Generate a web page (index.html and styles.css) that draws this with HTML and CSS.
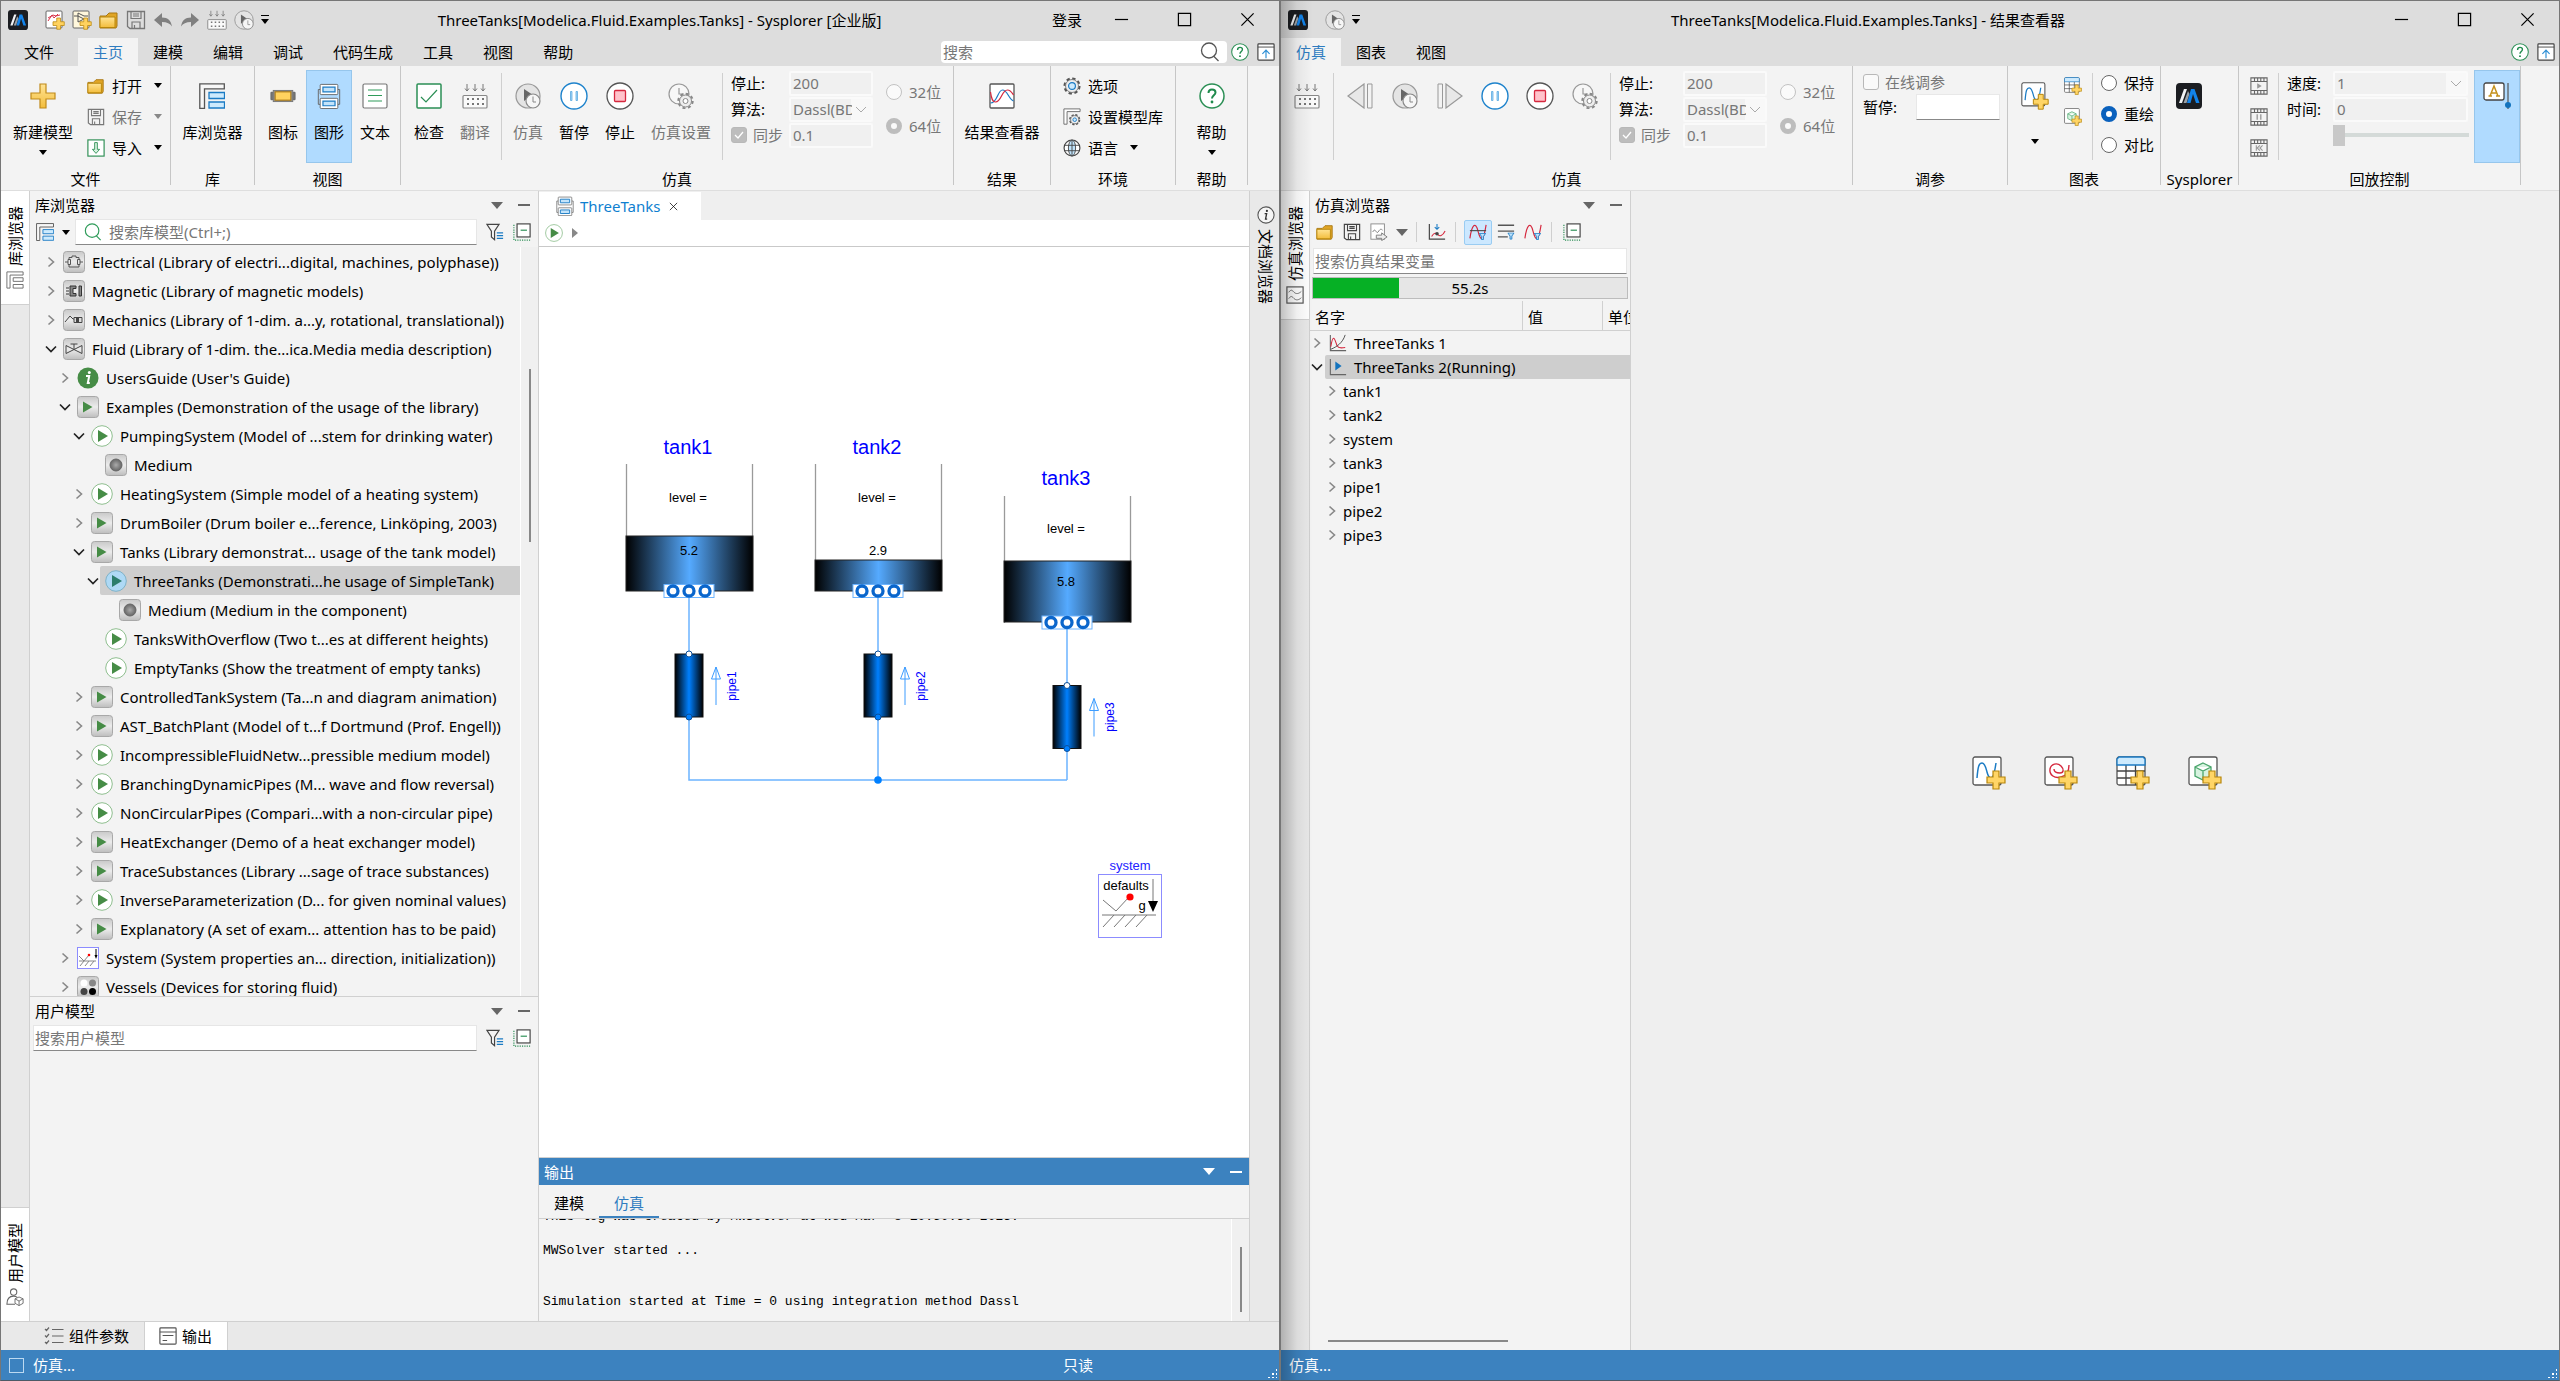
FILE: index.html
```html
<!DOCTYPE html>
<html lang="zh-CN">
<head>
<meta charset="utf-8">
<title>Sysplorer</title>
<link rel="stylesheet" href="styles.css">
</head>
<body>
<svg class="defs" aria-hidden="true">
  <defs>
    <linearGradient id="gold" x1="0" y1="0" x2="0" y2="1"><stop offset="0" stop-color="#ffe394"/><stop offset="1" stop-color="#f3bd3c"/></linearGradient>
    <linearGradient id="metal" x1="0" y1="0" x2="0" y2="1"><stop offset="0" stop-color="#c9c9c9"/><stop offset=".5" stop-color="#ececec"/><stop offset="1" stop-color="#bdbdbd"/></linearGradient>
    <radialGradient id="ball"><stop offset="0" stop-color="#aaa"/><stop offset="1" stop-color="#666"/></radialGradient>
    <linearGradient id="tankFill"><stop offset="0" stop-color="#000"/><stop offset=".5" stop-color="#55aaff"/><stop offset="1" stop-color="#000"/></linearGradient>
    <linearGradient id="pipeFill"><stop offset="0" stop-color="#000"/><stop offset=".5" stop-color="#0080ff"/><stop offset="1" stop-color="#000"/></linearGradient>
    <path id="plus" d="M5 0h5v5h5v5h-5v5H5v-5H0V5h5z" fill="#ffd25f" stroke="#b8860b"/>
  </defs>
  <symbol id="logo" viewBox="0 0 26 26"><rect width="26" height="26" rx="4" fill="#1b1d21"/><path d="M3 20 8 6h3L6 20z" fill="#f2f4f6"/><path d="M7.500 20 12 8l1.500 3-3 9z" fill="#9aa0a6"/><path d="M11 20 15 6h3.500l5 14H20l-3-9-2.500 9z" fill="#1283ea"/></symbol>
  <symbol id="newmodel" viewBox="0 0 20 20"><rect x="1" y="1" width="16" height="17" rx="1" fill="#fff" stroke="#666"/><path d="M3 11 7 5l2 3 4-4M3 8l5-3 3 1 4-1" fill="none" stroke="#d8344a"/><use href="#plus" transform="translate(8 8) scale(.75)"/></symbol>
  <symbol id="newclass" viewBox="0 0 20 20"><rect x="1" y="1" width="16" height="17" rx="1" fill="#fff7dc" stroke="#666"/><path d="M2 6h4l6 3-6 3V3l6 3h4" fill="none" stroke="#555"/><use href="#plus" transform="translate(8 8) scale(.75)"/></symbol>
  <symbol id="folder" viewBox="0 0 20 20"><path d="M1 6h6l3-3h8v13l-1 2H1z" fill="#e0a526" stroke="#a97813"/><path d="M1 7h15v10.500H1z" fill="url(#gold)" stroke="#b8860b"/></symbol>
  <symbol id="save" viewBox="0 0 20 20"><path d="M1.500 1.500h17v17H4l-2.500-2z" fill="none" stroke="currentColor" stroke-width="1.300"/><path d="M5 1.500v7h10v-7M7 4h6M7 6h6M6 18.500V12h8v6.500M8.500 15v3" fill="none" stroke="currentColor" stroke-width="1.200"/></symbol>
  <symbol id="undo" viewBox="0 0 20 20"><path d="M9 3v4.500c6 0 9 3 10 9-2-3-5-4.500-10-4.500V17L1 10z" fill="#808080"/></symbol>
  <symbol id="redo" viewBox="0 0 20 20"><path d="M11 3v4.500c-6 0-9 3-10 9 2-3 5-4.500 10-4.500V17l8-7z" fill="#808080"/></symbol>
  <symbol id="translate" viewBox="0 0 26 26"><path d="M5 1v7m-2-2.500L5 8l2-2.500M13 1v7m-2-2.500L13 8l2-2.500M21 1v7m-2-2.500L21 8l2-2.500" fill="none" stroke="#777"/><rect x="1" y="12.500" width="24" height="12.500" rx="1" fill="#fafafa" stroke="#888" stroke-width="1.200"/><path d="M5 16h2M10 16h2M15 16h2M20 16h2M5 21h2M10 21h2M15 21h2M20 21h2" stroke="#777" stroke-width="2"/></symbol>
  <symbol id="simclock" viewBox="0 0 26 26"><circle cx="13" cy="13" r="12" fill="#e4e4e4" stroke="#999" stroke-width="1.200"/><path d="M9 6v12l9-6z" fill="#666"/><circle cx="18" cy="18" r="7" fill="#f6f6f6" stroke="#888" stroke-width="1.200"/><path d="M18 13.500V19h3" fill="none" stroke="#888"/></symbol>
  <symbol id="simset" viewBox="0 0 26 26"><circle cx="11" cy="11" r="10" fill="#f7f7f7" stroke="#999" stroke-width="1.200"/><path d="M11 5v6h5" fill="none" stroke="#999" stroke-width="1.200"/><circle cx="17.500" cy="18" r="6" fill="#eee" stroke="#888"/><circle cx="17.500" cy="18" r="7.200" fill="none" stroke="#888" stroke-width="2" stroke-dasharray="3 2.650"/><circle cx="17.500" cy="18" r="2.500" fill="#fff" stroke="#888"/></symbol>
  <symbol id="bigplus" viewBox="0 0 26 26"><path d="M10 1h6v9h9v6h-9v9h-6v-9H1v-6h9z" fill="url(#gold)" stroke="#c08a1a" stroke-width="1.200"/></symbol>
  <symbol id="import" viewBox="0 0 20 20"><rect x="1" y="1" width="18" height="18" fill="#fff" stroke="#2f8f55" stroke-width="1.300"/><path d="M8.500 4h3v7.500H14L10 16l-4-4.500h2.500z" fill="#d6f2df" stroke="#2f8f55"/></symbol>
  <symbol id="lib" viewBox="0 0 26 26"><path d="M.800.800h24.500v5H5.500v19.500H.800z" fill="#f7f7f7" stroke="#555" stroke-width="1.300"/><path d="M10 9.500h15.500v6H10zM10 19h15.500v6H10z" fill="#cdeafd" stroke="#1b7bc4" stroke-width="1.300"/></symbol>
  <symbol id="libgray" viewBox="0 0 20 20"><path d="M1 1h18v3.500H4.500V19H1z" fill="#fff" stroke="#666"/><path d="M8 7.500h11v4H8zM8 15h11v4H8z" fill="#fff" stroke="#666"/></symbol>
  <symbol id="iconview" viewBox="0 0 28 28"><path d="M1 10h4v8H1zM23 10h4v8h-4z" fill="#777" stroke="#666"/><rect x="3.500" y="8" width="21" height="12" fill="#999" stroke="#777"/><rect x="5.500" y="9.500" width="17" height="9" fill="#ffd25f" stroke="#a97813" stroke-width="1.200"/></symbol>
  <symbol id="diagram" viewBox="0 0 26 28"><path d="M4 7H1.500v16H4M22 7h2.500v16H22" fill="none" stroke="#666"/><rect x="3.500" y="1.500" width="19" height="11" rx="1" fill="#fff" stroke="#666"/><rect x="3.500" y="16.500" width="19" height="11" rx="1" fill="#fff" stroke="#666"/><path d="M6.500 4.500h13v5h-13zM6.500 19.500h13v5h-13z" fill="#c3e4fb" stroke="#1b7bc4" stroke-width="1.300"/></symbol>
  <symbol id="textview" viewBox="0 0 26 26"><rect x="1" y="1" width="24" height="24" rx="1.500" fill="#fff" stroke="#777" stroke-width="1.200"/><path d="M6 7h14M6 12.500h14M6 18h14" stroke="#2f9c5a" stroke-width="1.200"/></symbol>
  <symbol id="check" viewBox="0 0 26 26"><rect x="1" y="1" width="24" height="24" rx="1" fill="#fff" stroke="#2b8f55" stroke-width="1.500"/><path d="m5 14 5 5L21 7" fill="none" stroke="#2b8f55" stroke-width="1.200"/></symbol>
  <symbol id="pause" viewBox="0 0 28 28"><circle cx="14" cy="14" r="13" fill="#fff" stroke="#1e83cc" stroke-width="1.400"/><path d="M10.500 9.500v9h1.500v-9zM16 9.500v9h1.500v-9z" fill="#a9d8f7" stroke="#4ba0dc" stroke-width=".700"/></symbol>
  <symbol id="stop" viewBox="0 0 28 28"><circle cx="14" cy="14" r="13" fill="#fff" stroke="#555" stroke-width="1.300"/><rect x="8.500" y="8.500" width="11" height="11" rx="1" fill="#ffc3cb" stroke="#d5283e" stroke-width="1.300"/></symbol>
  <symbol id="back" viewBox="0 0 26 26"><path d="M17 1v24L1 13z" fill="#e8e8e8" stroke="#999" stroke-width="1.200"/><path d="M20.500 1H25v24h-4.500z" fill="#f3f3f3" stroke="#999"/></symbol>
  <symbol id="fwd" viewBox="0 0 26 26"><path d="M9 1v24l16-12z" fill="#e8e8e8" stroke="#999" stroke-width="1.200"/><path d="M1 1h4.500v24H1z" fill="#f3f3f3" stroke="#999"/></symbol>
  <symbol id="result" viewBox="0 0 26 26"><rect x="1" y="1" width="24" height="24" rx="1" fill="#fff" stroke="#555" stroke-width="1.300"/><path d="M1.500 20c7 0 7-13 12-13s6 9 11 11" fill="none" stroke="#1b7bc4" stroke-width="1.200"/><path d="M1.500 9c1 7 2 10 5 10 6 0 6-12 12-12 3 0 4 2 6 5" fill="none" stroke="#d5283e" stroke-width="1.200"/></symbol>
  <symbol id="gear" viewBox="0 0 20 20"><circle cx="10" cy="10" r="8" fill="#eee" stroke="#555" stroke-width="3" stroke-dasharray="3.600 2.680"/><circle cx="10" cy="10" r="7.200" fill="#eee" stroke="#777"/><circle cx="10" cy="10" r="3.800" fill="#cdeafd" stroke="#1b7bc4" stroke-width="1.300"/></symbol>
  <symbol id="libset" viewBox="0 0 20 20"><path d="M1 1h18v3H4.500v14H1z" fill="#fff" stroke="#666"/><circle cx="13" cy="13" r="5" fill="#eee" stroke="#555" stroke-width="2.500" stroke-dasharray="2.300 1.630"/><circle cx="13" cy="13" r="4.500" fill="#eee" stroke="#777"/><circle cx="13" cy="13" r="2" fill="#cdeafd" stroke="#1b7bc4"/></symbol>
  <symbol id="globe" viewBox="0 0 20 20"><circle cx="10" cy="10" r="8.800" fill="#fff" stroke="#444" stroke-width="1.300"/><ellipse cx="10" cy="10" rx="4" ry="8.800" fill="#bfe3fb" stroke="#444"/><path d="M1.500 7h17M1.500 13h17M10 1v18" fill="none" stroke="#444"/></symbol>
  <symbol id="help" viewBox="0 0 26 26"><circle cx="13" cy="13" r="12" fill="#fff" stroke="#2b8f55" stroke-width="1.500"/><path d="M9.500 10c0-5 7-4.500 7-.500 0 2.700-3.500 3-3.500 6" fill="none" stroke="#1f8a4c" stroke-width="2"/><circle cx="13" cy="19" r="1.400" fill="#1f8a4c"/></symbol>
  <symbol id="uparrow" viewBox="0 0 20 20"><rect x="1" y="1" width="18" height="18" rx="1" fill="#fff" stroke="#444" stroke-width="1.300"/><path d="M1 4.500h18" stroke="#444"/><path d="M10 17V8m-4 4 4-4 4 4" fill="none" stroke="#2d8fd5" stroke-width="1.300"/></symbol>
  <symbol id="lens" viewBox="0 0 20 20"><circle cx="9" cy="8.500" r="7.500" fill="none" stroke="currentColor" stroke-width="1.300"/><path d="m13.500 14 5 5" stroke="currentColor" stroke-width="1.300"/></symbol>
  <symbol id="filter" viewBox="0 0 20 20"><path d="M1 1.500h13.500l-5 7.500v9.500L6 15.500V9z" fill="none" stroke="#444" stroke-width="1.300"/><path d="M12 11h7M12 14h7M12 17h7" stroke="#1b7bc4" stroke-width="1.300"/></symbol>
  <symbol id="collapse" viewBox="0 0 20 20"><rect x="4.500" y="1" width="14.500" height="14.500" fill="#fff" stroke="#444" stroke-width="1.300"/><path d="M8.500 8h7" stroke="#2b8f55" stroke-width="1.300"/><path d="M1 2v17h18" fill="none" stroke="#2b8f55" stroke-width="1.300" stroke-dasharray="1.300 1.300"/></symbol>
  <symbol id="chevr" viewBox="0 0 14 14"><path d="m4.500 2.500 5 4.500-5 4.500" fill="none" stroke="#888" stroke-width="1.600"/></symbol>
  <symbol id="chevd" viewBox="0 0 14 14"><path d="M2 4.500 7 9.500l5-5" fill="none" stroke="#222" stroke-width="1.700"/></symbol>
  <symbol id="pkg" viewBox="0 0 22 22"><rect x=".500" y=".500" width="21" height="21" rx="3" fill="url(#metal)" stroke="#a8a8a8"/></symbol>
  <symbol id="pkgplay" viewBox="0 0 22 22"><use href="#pkg"/><path d="M6 5.500v11l9.500-5.500z" fill="#468c46"/></symbol>
  <symbol id="play" viewBox="0 0 22 22"><circle cx="11" cy="11" r="10.300" fill="#fff" stroke="#8fbf8f"/><path d="M7 5v12l10-6z" fill="#468c46"/></symbol>
  <symbol id="playsel" viewBox="0 0 22 22"><circle cx="11" cy="11" r="10.300" fill="#aed9f5" stroke="#7fb3c9"/><path d="M7 5v12l10-6z" fill="#2b7d6c"/></symbol>
  <symbol id="medium" viewBox="0 0 22 22"><use href="#pkg"/><circle cx="11" cy="11" r="6" fill="url(#ball)" stroke="#666"/></symbol>
  <symbol id="info" viewBox="0 0 22 22"><circle cx="11" cy="11" r="10.500" fill="#468c46"/><path d="M9 9h3.200l-1.400 7h2" fill="none" stroke="#fff" stroke-width="2"/><circle cx="12.300" cy="5.500" r="1.500" fill="#fff"/></symbol>
  <symbol id="electrical" viewBox="0 0 22 22"><use href="#pkg"/><path d="M2 11h3M17 11h3M5 8.500h2.500v5H5zM14.500 8.500H17v5h-2.500zM6 8.500V6.500h3V5h4v1.500h3v2M6 13.500V16h10v-2.500" fill="none" stroke="#555"/></symbol>
  <symbol id="magnetic" viewBox="0 0 22 22"><use href="#pkg"/><path d="M13 6H7v10h6v-2.500h-3v-5h3zM16 6h2.500v10H16zM3 8h3M3 11h3M3 14h3" fill="#888" stroke="#333"/></symbol>
  <symbol id="mechanics" viewBox="0 0 22 22"><use href="#pkg"/><path d="m2 13 5-6 3 3h2" fill="none" stroke="#444"/><path d="M11 8.500h8v5h-8z" fill="#ddd" stroke="#444"/><path d="M13 9v4h3V9z" fill="#444"/></symbol>
  <symbol id="fluid" viewBox="0 0 22 22"><use href="#pkg"/><path d="M3 7.500v8l16-8v8zM11 11V6M7.500 6h7" fill="none" stroke="#444"/></symbol>
  <symbol id="systemicon" viewBox="0 0 22 22"><rect x=".500" y=".500" width="21" height="21" fill="#fff" stroke="#8c8cff"/><path d="m2 9 5 5 5-6M2 14h17M3 19l4-5M8 19l4-5M13 19l4-5" fill="none" stroke="#888"/><circle cx="12" cy="8" r="1.300" fill="red"/><path d="M19 2v6" stroke="#000"/><path d="M17.500 8h3L19 12z"/></symbol>
  <symbol id="vessels" viewBox="0 0 22 22"><use href="#pkg"/><circle cx="7" cy="7" r="3.500" fill="#fff"/><circle cx="15.500" cy="7" r="3.500" fill="#888"/><circle cx="7" cy="15.500" r="3.500" fill="#444"/><circle cx="15.500" cy="15.500" r="3.500"/></symbol>
  <symbol id="params" viewBox="0 0 20 20"><path d="m1 3 1.500 1.500L5 1.500M1 9.500 2.500 11 5 8M1 16l1.500 1.500L5 14.500M8 3.500h11.500M8 10h11.500M8 16.500h11.500" fill="none" stroke="#666" stroke-width="1.200"/></symbol>
  <symbol id="output" viewBox="0 0 20 20"><rect x="1" y="1" width="18" height="18" rx="1" fill="#fff" stroke="#555" stroke-width="1.300"/><path d="M1 5.500h18M4 9.500h12M4 15h5" stroke="#555" stroke-width="1.200"/></symbol>
  <symbol id="user" viewBox="0 0 20 20"><circle cx="8.500" cy="4.500" r="3.500" fill="none" stroke="#666" stroke-width="1.200"/><path d="M10 18H1c0-6 3-9 7.500-9 2 0 3 .500 4 1.500" fill="none" stroke="#666" stroke-width="1.200"/><path d="m14.500 10 4.500 2v5l-4.500 2.500L10 17v-5zM10 12l4.500 2.500L19 12M14.500 14.500v5" fill="#fff" stroke="#666"/></symbol>
  <symbol id="wave" viewBox="0 0 20 20"><rect x="1" y="1" width="18" height="18" fill="#fff" stroke="#555" stroke-width="1.300"/><path d="M3 7c3-4 4-2 6 0s5 2 8-1M3 14c3-4 4-2 6 0s5 2 8-1" fill="none" stroke="#666"/></symbol>
  <symbol id="inforound" viewBox="0 0 20 20"><circle cx="10" cy="10" r="9" fill="#f6f6f6" stroke="#555" stroke-width="1.200"/><path d="M8.500 8.500h2.200l-1.200 6h1.800" fill="none" stroke="#333" stroke-width="1.500"/><circle cx="11" cy="5.500" r="1.200" fill="#333"/></symbol>
  <symbol id="export" viewBox="0 0 20 20"><rect x="1" y="1" width="15" height="17" fill="#fff" stroke="#888"/><path d="M3 10c3-6 4 3 6 0s3-4 5-2" fill="none" stroke="#777"/><path d="M7 13.500h6V11l6 4.500-6 4V17H7z" fill="#eee" stroke="#777"/></symbol>
  <symbol id="axis" viewBox="0 0 20 20"><path d="M1.500 1v17H19" fill="none" stroke="#444" stroke-width="1.300"/><path d="M10 1v6m-2.500-2.500L10 7l2.500-2.500" fill="none" stroke="#1b7bc4" stroke-width="1.200"/><path d="M4 15c3-5 5-4 7-2s5 2 8-4" fill="none" stroke="#d5283e" stroke-width="1.200"/><circle cx="10" cy="12" r="2" fill="#444"/></symbol>
  <symbol id="funnel" viewBox="0 0 8 8"><path d="M.500.500h7L5 4v3.500H3V4z" fill="#bfe3fb" stroke="#1b7bc4"/></symbol>
  <symbol id="curveline" viewBox="0 0 20 20"><path d="M1 17C3 3 7-3 10 9s6 12 9-7" fill="none" stroke="#d5283e" stroke-width="1.300"/><path d="M1 8.500h18" stroke="#444" stroke-width="1.200"/><use href="#funnel" x="11" y="11" width="8" height="8"/></symbol>
  <symbol id="curve" viewBox="0 0 20 20"><path d="M1 17C3 3 7-3 10 9s6 12 9-7" fill="none" stroke="#d5283e" stroke-width="1.300"/><use href="#funnel" x="11" y="11" width="8" height="8"/></symbol>
  <symbol id="lines" viewBox="0 0 20 20"><path d="M1 2.500h18M1 9h18M1 15.500h11" stroke="#555" stroke-width="1.400"/><use href="#funnel" x="11.500" y="10.500" width="8" height="8"/></symbol>
  <symbol id="plot" viewBox="0 0 20 20"><path d="M1.500 1v17.500H19" fill="none" stroke="#666" stroke-width="1.200"/><path d="M2 14C5-4 7 9 9 13s6 2 9 2" fill="none" stroke="#d5283e" stroke-width="1.200"/><path d="M2 17C9 14 15 10 18 1" fill="none" stroke="#444"/></symbol>
  <symbol id="plotrun" viewBox="0 0 20 20"><path d="M1.500 1v17.500H19" fill="none" stroke="#666" stroke-width="1.200"/><path d="M7 4v10l7-5z" fill="#1273be"/></symbol>
  <symbol id="addcurve" viewBox="0 0 34 34"><rect x="1" y="1" width="28" height="28" rx="2" fill="#fff" stroke="#555" stroke-width="1.300"/><path d="M5 22C6 10 7 7 10 7s4 5 5 9 2 6 4 6 4-8 5-15" fill="none" stroke="#1b7bc4" stroke-width="1.500"/><path d="M21 15h6v6h6v6h-6v6h-6v-6h-6v-6h6z" fill="#ffd566" stroke="#b8860b" stroke-width="1.200"/></symbol>
  <symbol id="addspiral" viewBox="0 0 34 34"><rect x="1" y="1" width="28" height="28" rx="2" fill="#fff" stroke="#555" stroke-width="1.300"/><path d="M10 13c0 3 3 4 6 4 4 0 4-4 1-7-4-4-10-2-11 3-1 6 5 10 11 8 5-1 8-5 8-12" fill="none" stroke="#d5283e" stroke-width="1.400"/><path d="M21 15h6v6h6v6h-6v6h-6v-6h-6v-6h6z" fill="#ffd566" stroke="#b8860b" stroke-width="1.200"/></symbol>
  <symbol id="addtable" viewBox="0 0 34 34"><rect x="1" y="1" width="28" height="28" rx="2" fill="#fff" stroke="#555" stroke-width="1.300"/><path d="M1 15h28M1 22h28M10 9v20M19.500 9v20" stroke="#444" stroke-width="1.300"/><path d="M1 9V3l2-2h24l2 2v6z" fill="#cdeafd" stroke="#1b7bc4" stroke-width="1.300"/><path d="M21 15h6v6h6v6h-6v6h-6v-6h-6v-6h6z" fill="#ffd566" stroke="#b8860b" stroke-width="1.200"/></symbol>
  <symbol id="addcube" viewBox="0 0 34 34"><rect x="1" y="1" width="28" height="28" rx="2" fill="#fff" stroke="#555" stroke-width="1.300"/><path d="m15 7 8 4v9l-8 4-8-4v-9zM7 11l8 4 8-4M15 15v9" fill="#d7f3e0" stroke="#4aa56c" stroke-width="1.300"/><path d="M21 15h6v6h6v6h-6v6h-6v-6h-6v-6h6z" fill="#ffd566" stroke="#b8860b" stroke-width="1.200"/></symbol>
  <symbol id="film" viewBox="0 0 20 20"><path d="M1 1h18v18H1zM1 5h18M1 15h18M5 1v4M8.500 1v4M12 1v4M15.500 1v4M5 15v4M8.500 15v4M12 15v4M15.500 15v4" fill="none" stroke="#666" stroke-width="1.200"/></symbol>
  <symbol id="filmplay" viewBox="0 0 20 20"><use href="#film"/><path d="M8 7v6l5-3z" fill="#999"/></symbol>
  <symbol id="filmpause" viewBox="0 0 20 20"><use href="#film"/><path d="M8 7v6M12 7v6" stroke="#999" stroke-width="1.500"/></symbol>
  <symbol id="filmstart" viewBox="0 0 20 20"><use href="#film"/><path d="M7 7v6M11 7l-3 3 3 3M14 7l-3 3 3 3" fill="none" stroke="#999" stroke-width="1.200"/></symbol>
  <symbol id="annot" viewBox="0 0 28 28"><rect x="1" y="1" width="20" height="17" rx="2" fill="#fff" stroke="#444" stroke-width="1.300"/><path d="m7 14 4-10 4 10M8.500 11h5M5.500 14h3.500M13 14h4" fill="none" stroke="#c4911c" stroke-width="1.500"/><path d="M25 1v26" stroke="#555" stroke-width="1.200"/><circle cx="25" cy="23" r="3" fill="#1273be"/></symbol>
  <symbol id="wmin" viewBox="0 0 16 16"><path d="M1 8h14" stroke="#000" stroke-width="1.300"/></symbol>
  <symbol id="wmax" viewBox="0 0 16 16"><path d="M1.500 1.500h13v13h-13z" fill="none" stroke="#000" stroke-width="1.300"/></symbol>
  <symbol id="wclose" viewBox="0 0 16 16"><path d="m1.500 1.500 13 13m0-13-13 13" stroke="#000" stroke-width="1.300"/></symbol>
</svg>

<div class="desktop">
<section class="window" aria-label="Sysplorer">
  <header class="titlebar">
    <div class="qat">
      <svg class="i20 app"><use href="#logo"/></svg>
      <button aria-label="新建模型"><svg class="i20"><use href="#newmodel"/></svg></button>
      <button aria-label="新建"><svg class="i20"><use href="#newclass"/></svg></button>
      <button aria-label="打开"><svg class="i20"><use href="#folder"/></svg></button>
      <button class="dim" aria-label="保存"><svg class="i20"><use href="#save"/></svg></button>
      <button aria-label="撤销"><svg class="i20"><use href="#undo"/></svg></button>
      <button aria-label="重做"><svg class="i20"><use href="#redo"/></svg></button>
      <button aria-label="翻译"><svg class="i20"><use href="#translate"/></svg></button>
      <button aria-label="仿真"><svg class="i20"><use href="#simclock"/></svg></button>
      <button class="more" aria-label="更多"><i class="bar"></i><i class="caret"></i></button>
    </div>
    <h1>ThreeTanks[Modelica.Fluid.Examples.Tanks] - Sysplorer [企业版]</h1>
    <button class="login">登录</button>
    <div class="winctl">
      <button aria-label="最小化"><svg><use href="#wmin"/></svg></button>
      <button aria-label="最大化"><svg><use href="#wmax"/></svg></button>
      <button aria-label="关闭"><svg><use href="#wclose"/></svg></button>
    </div>
  </header>
  <nav class="tabs">
    <button class="file">文件</button><button class="on">主页</button><button>建模</button><button>编辑</button><button>调试</button><button>代码生成</button><button>工具</button><button>视图</button><button>帮助</button>
    <div class="tabtools">
      <label class="findbox"><input type="text" placeholder="搜索" aria-label="搜索"><svg class="i20"><use href="#lens"/></svg></label>
      <button aria-label="帮助"><svg class="i18"><use href="#help"/></svg></button>
      <button aria-label="折叠"><svg class="i18"><use href="#uparrow"/></svg></button>
    </div>
  </nav>
  <div class="ribbon">
    <div class="group g-file">
      <div class="tools">
        <button class="big wide"><svg><use href="#bigplus"/></svg><span>新建模型</span><i class="caret"></i></button>
        <div class="stack">
          <button class="small"><svg class="i18"><use href="#folder"/></svg><span>打开</span><i class="caret"></i></button>
          <button class="small dim" disabled><svg class="i18"><use href="#save"/></svg><span>保存</span><i class="caret"></i></button>
          <button class="small"><svg class="i18"><use href="#import"/></svg><span>导入</span><i class="caret"></i></button>
        </div>
      </div>
      <h2>文件</h2>
    </div>
    <div class="group g-lib">
      <div class="tools center"><button class="big"><svg><use href="#lib"/></svg><span>库浏览器</span></button></div>
      <h2>库</h2>
    </div>
    <div class="group g-view">
      <div class="tools pad5">
        <button class="big"><svg><use href="#iconview"/></svg><span>图标</span></button>
        <button class="big sel"><svg><use href="#diagram"/></svg><span>图形</span></button>
        <button class="big"><svg><use href="#textview"/></svg><span>文本</span></button>
      </div>
      <h2>视图</h2>
    </div>
    <div class="group g-sim">
      <div class="tools pad5">
        <button class="big"><svg><use href="#check"/></svg><span>检查</span></button>
        <button class="big dim" disabled><svg><use href="#translate"/></svg><span>翻译</span></button>
        <i class="sep"></i>
        <button class="big dim" disabled><svg><use href="#simclock"/></svg><span>仿真</span></button>
        <button class="big"><svg class="i28"><use href="#pause"/></svg><span>暂停</span></button>
        <button class="big"><svg class="i28"><use href="#stop"/></svg><span>停止</span></button>
        <button class="big dim w76" disabled><svg><use href="#simset"/></svg><span>仿真设置</span></button>
        <i class="sep"></i>
        <div class="form">
          <label for="stop1">停止:</label><input id="stop1" type="text" value="200" disabled>
          <label for="alg1">算法:</label><select id="alg1" disabled><option>Dassl(BDF)</option></select>
          <label class="tick dim"><input type="checkbox" checked disabled>同步</label><input type="text" value="0.1" aria-label="同步间隔" disabled>
        </div>
        <div class="radios">
          <label class="dim"><input type="radio" name="bits1" disabled>32位</label>
          <label class="dim"><input type="radio" name="bits1" checked disabled>64位</label>
        </div>
      </div>
      <h2>仿真</h2>
    </div>
    <div class="group g-res">
      <div class="tools center"><button class="big"><svg><use href="#result"/></svg><span>结果查看器</span></button></div>
      <h2>结果</h2>
    </div>
    <div class="group g-env">
      <div class="tools pad10"><div class="stack">
        <button class="small"><svg class="i18"><use href="#gear"/></svg><span>选项</span></button>
        <button class="small"><svg class="i18"><use href="#libset"/></svg><span>设置模型库</span></button>
        <button class="small"><svg class="i18"><use href="#globe"/></svg><span>语言</span><i class="caret"></i></button>
      </div></div>
      <h2>环境</h2>
    </div>
    <div class="group g-help">
      <div class="tools center"><button class="big"><svg><use href="#help"/></svg><span>帮助</span><i class="caret"></i></button></div>
      <h2>帮助</h2>
    </div>
  </div>

  <div class="body">
    <aside class="strip left">
      <button class="vtab up"><span>库浏览器</span><svg class="i18"><use href="#libgray"/></svg></button>
      <button class="vtab up last"><span>用户模型</span><svg class="i18"><use href="#user"/></svg></button>
    </aside>
    <div class="panel lib">
      <div class="phead"><h3>库浏览器</h3><i class="caret wide"></i><i class="dash"></i></div>
      <div class="psearch">
        <button class="mode" aria-label="显示方式"><svg class="i18"><use href="#lib"/></svg><i class="caret"></i></button>
        <label class="field"><svg class="i18"><use href="#lens"/></svg><input type="text" placeholder="搜索库模型(Ctrl+;)" aria-label="搜索库模型"></label>
        <button aria-label="筛选"><svg class="i18"><use href="#filter"/></svg></button>
        <button aria-label="全部折叠"><svg class="i18"><use href="#collapse"/></svg></button>
      </div>
      <div class="treebox">
        <ul class="tree">
          <li class="l0"><svg class="chev"><use href="#chevr"/></svg><span class="item"><svg><use href="#electrical"/></svg>Electrical (Library of electri...digital, machines, polyphase))</span></li>
          <li class="l0"><svg class="chev"><use href="#chevr"/></svg><span class="item"><svg><use href="#magnetic"/></svg>Magnetic (Library of magnetic models)</span></li>
          <li class="l0"><svg class="chev"><use href="#chevr"/></svg><span class="item"><svg><use href="#mechanics"/></svg>Mechanics (Library of 1-dim. a...y, rotational, translational))</span></li>
          <li class="l0"><svg class="chev"><use href="#chevd"/></svg><span class="item"><svg><use href="#fluid"/></svg>Fluid (Library of 1-dim. the...ica.Media media description)</span></li>
          <li class="l1"><svg class="chev"><use href="#chevr"/></svg><span class="item"><svg><use href="#info"/></svg>UsersGuide (User's Guide)</span></li>
          <li class="l1"><svg class="chev"><use href="#chevd"/></svg><span class="item"><svg><use href="#pkgplay"/></svg>Examples (Demonstration of the usage of the library)</span></li>
          <li class="l2"><svg class="chev"><use href="#chevd"/></svg><span class="item"><svg><use href="#play"/></svg>PumpingSystem (Model of ...stem for drinking water)</span></li>
          <li class="l3"><i class="chev"></i><span class="item"><svg><use href="#medium"/></svg>Medium</span></li>
          <li class="l2"><svg class="chev"><use href="#chevr"/></svg><span class="item"><svg><use href="#play"/></svg>HeatingSystem (Simple model of a heating system)</span></li>
          <li class="l2"><svg class="chev"><use href="#chevr"/></svg><span class="item"><svg><use href="#pkgplay"/></svg>DrumBoiler (Drum boiler e...ference, Linköping, 2003)</span></li>
          <li class="l2"><svg class="chev"><use href="#chevd"/></svg><span class="item"><svg><use href="#pkgplay"/></svg>Tanks (Library demonstrat... usage of the tank model)</span></li>
          <li class="l3"><svg class="chev"><use href="#chevd"/></svg><span class="item sel"><svg><use href="#playsel"/></svg>ThreeTanks (Demonstrati...he usage of SimpleTank)</span></li>
          <li class="l4"><i class="chev"></i><span class="item"><svg><use href="#medium"/></svg>Medium (Medium in the component)</span></li>
          <li class="l3"><i class="chev"></i><span class="item"><svg><use href="#play"/></svg>TanksWithOverflow (Two t...es at different heights)</span></li>
          <li class="l3"><i class="chev"></i><span class="item"><svg><use href="#play"/></svg>EmptyTanks (Show the treatment of empty tanks)</span></li>
          <li class="l2"><svg class="chev"><use href="#chevr"/></svg><span class="item"><svg><use href="#pkgplay"/></svg>ControlledTankSystem (Ta...n and diagram animation)</span></li>
          <li class="l2"><svg class="chev"><use href="#chevr"/></svg><span class="item"><svg><use href="#pkgplay"/></svg>AST_BatchPlant (Model of t...f Dortmund (Prof. Engell))</span></li>
          <li class="l2"><svg class="chev"><use href="#chevr"/></svg><span class="item"><svg><use href="#play"/></svg>IncompressibleFluidNetw...pressible medium model)</span></li>
          <li class="l2"><svg class="chev"><use href="#chevr"/></svg><span class="item"><svg><use href="#play"/></svg>BranchingDynamicPipes (M... wave and flow reversal)</span></li>
          <li class="l2"><svg class="chev"><use href="#chevr"/></svg><span class="item"><svg><use href="#play"/></svg>NonCircularPipes (Compari...with a non-circular pipe)</span></li>
          <li class="l2"><svg class="chev"><use href="#chevr"/></svg><span class="item"><svg><use href="#pkgplay"/></svg>HeatExchanger (Demo of a heat exchanger model)</span></li>
          <li class="l2"><svg class="chev"><use href="#chevr"/></svg><span class="item"><svg><use href="#pkgplay"/></svg>TraceSubstances (Library ...sage of trace substances)</span></li>
          <li class="l2"><svg class="chev"><use href="#chevr"/></svg><span class="item"><svg><use href="#play"/></svg>InverseParameterization (D... for given nominal values)</span></li>
          <li class="l2"><svg class="chev"><use href="#chevr"/></svg><span class="item"><svg><use href="#pkgplay"/></svg>Explanatory (A set of exam... attention has to be paid)</span></li>
          <li class="l1"><svg class="chev"><use href="#chevr"/></svg><span class="item"><svg><use href="#systemicon"/></svg>System (System properties an... direction, initialization))</span></li>
          <li class="l1"><svg class="chev"><use href="#chevr"/></svg><span class="item"><svg><use href="#vessels"/></svg>Vessels (Devices for storing fluid)</span></li>
        </ul>
        <div class="vscroll"><i class="thumb"></i></div>
      </div>
      <div class="usermodel">
        <div class="phead"><h3>用户模型</h3><i class="caret wide"></i><i class="dash"></i></div>
        <div class="psearch">
          <label class="field plain"><input type="text" placeholder="搜索用户模型" aria-label="搜索用户模型"></label>
          <button aria-label="筛选"><svg class="i18"><use href="#filter"/></svg></button>
          <button aria-label="全部折叠"><svg class="i18"><use href="#collapse"/></svg></button>
        </div>
      </div>
    </div>
    <main class="editor">
      <div class="doctabs"><div class="doctab"><svg class="i20"><use href="#diagram"/></svg><span>ThreeTanks</span><button aria-label="关闭"><svg><use href="#wclose"/></svg></button></div></div>
      <div class="crumbs"><svg class="i18"><use href="#play"/></svg><i class="rcaret"></i></div>
      <div class="canvas">
        <svg viewBox="539 247 710 910" role="img" aria-label="ThreeTanks">
          <g fill="none" stroke="#6cb4ff" stroke-width="1.500">
            <path d="M689 598v182h378M878 598v182M1067 629v151"/>
          </g>
          <g>
            <path d="M626.500 464v127M752.500 464v127M815.500 464v127M941.500 464v127M1004.500 496v127M1130.500 496v127" stroke="#9a9a9a" stroke-width="1.300"/>
            <rect x="626" y="536" width="127" height="55" fill="url(#tankFill)" stroke="#222"/>
            <rect x="815" y="560" width="127" height="31" fill="url(#tankFill)" stroke="#222"/>
            <rect x="1004" y="561" width="127" height="61" fill="url(#tankFill)" stroke="#222"/>
          </g>
          <g id="ports">
            <rect x="664" y="584.500" width="50" height="13" fill="#fff" stroke="#6cb4ff"/>
            <g fill="#fff" stroke="#0a66cc" stroke-width="3.300"><circle cx="673" cy="591" r="5"/><circle cx="689" cy="591" r="5"/><circle cx="705" cy="591" r="5"/></g>
          </g>
          <use href="#ports" x="189"/><use href="#ports" x="378" y="31.500"/>
          <g id="pipe">
            <rect x="675" y="654" width="28" height="63" fill="url(#pipeFill)" stroke="#111"/>
            <circle cx="689" cy="654" r="3" fill="#fff" stroke="#0b4f99"/><circle cx="689" cy="717" r="3" fill="#0080ff" stroke="#0b4f99"/>
            <path d="M716 705v-38M711.500 679l4.500-12 4.500 12z" fill="none" stroke="#3c9cff"/>
          </g>
          <use href="#pipe" x="189"/><use href="#pipe" x="378" y="31.500"/>
          <circle cx="878" cy="780" r="3.800" fill="#0080ff"/>
          <g class="tname"><text x="688" y="454">tank1</text><text x="877" y="454">tank2</text><text x="1066" y="485">tank3</text></g>
          <g class="tval"><text x="688" y="502">level =</text><text x="877" y="502">level =</text><text x="1066" y="533">level =</text>
            <text x="689" y="555">5.2</text><text x="878" y="555">2.9</text><text x="1066" y="586">5.8</text></g>
          <g class="tpipe"><text transform="translate(736 686) rotate(-90)">pipe1</text><text transform="translate(925 686) rotate(-90)">pipe2</text><text transform="translate(1114 717) rotate(-90)">pipe3</text></g>
          <text class="tsys" x="1130" y="870">system</text>
          <rect x="1098.500" y="874.500" width="63" height="63" fill="#fff" stroke="#8c8cff"/>
          <path d="m1103 900 13 11 13-14M1102 915h54M1103 927l11-12M1114 927l11-12M1125 927l11-12M1136 927l11-12M1153 879v22" fill="none" stroke="#777"/>
          <circle cx="1130" cy="897" r="3.600" fill="red"/><path d="M1148 901h10l-5 11z"/>
          <g class="tval"><text x="1126" y="890">defaults</text><text x="1142" y="910">g</text></g>
        </svg>
      </div>
      <section class="outpane">
        <div class="ohead"><h3>输出</h3><i class="caret wide"></i><i class="dash"></i></div>
        <div class="otabs"><button>建模</button><button class="on">仿真</button></div>
        <div class="logbox">
<pre>This log was created by MWSolver at Wed Mar  8 10:50:50 2023.

MWSolver started ...


Simulation started at Time = 0 using integration method Dassl</pre>
          <div class="vscroll"><i class="thumb"></i></div>
        </div>
      </section>
    </main>
    <aside class="strip right"><button class="vtab down"><svg class="i18"><use href="#inforound"/></svg><span>文档浏览器</span></button></aside>
  </div>
  <div class="bottombar">
    <button><svg class="i20"><use href="#params"/></svg>组件参数</button><button class="on"><svg class="i18"><use href="#output"/></svg>输出</button>
  </div>
  <footer class="status"><i class="square"></i><span>仿真...</span><span class="ro">只读</span><i class="grip"></i></footer>
</section>

<section class="window viewer" aria-label="结果查看器">
  <header class="titlebar">
    <div class="qat">
      <svg class="i20 app"><use href="#logo"/></svg>
      <button aria-label="仿真"><svg class="i20"><use href="#simclock"/></svg></button>
      <button class="more" aria-label="更多"><i class="bar"></i><i class="caret"></i></button>
    </div>
    <h1>ThreeTanks[Modelica.Fluid.Examples.Tanks] - 结果查看器</h1>
    <div class="winctl">
      <button aria-label="最小化"><svg><use href="#wmin"/></svg></button>
      <button aria-label="最大化"><svg><use href="#wmax"/></svg></button>
      <button aria-label="关闭"><svg><use href="#wclose"/></svg></button>
    </div>
  </header>
  <nav class="tabs">
    <button class="on">仿真</button><button>图表</button><button>视图</button>
    <div class="tabtools">
      <button aria-label="帮助"><svg class="i18"><use href="#help"/></svg></button>
      <button aria-label="折叠"><svg class="i18"><use href="#uparrow"/></svg></button>
    </div>
  </nav>
  <div class="ribbon">
    <div class="group v-sim">
      <div class="tools pad3">
        <button class="big" aria-label="翻译"><svg><use href="#translate"/></svg></button>
        <i class="sep"></i>
        <button class="big w45" aria-label="后退"><svg><use href="#back"/></svg></button>
        <button class="big w45" aria-label="仿真"><svg><use href="#simclock"/></svg></button>
        <button class="big w45" aria-label="前进"><svg><use href="#fwd"/></svg></button>
        <button class="big w45" aria-label="暂停"><svg class="i28"><use href="#pause"/></svg></button>
        <button class="big w45" aria-label="停止"><svg class="i28"><use href="#stop"/></svg></button>
        <button class="big w45" aria-label="仿真设置"><svg><use href="#simset"/></svg></button>
        <i class="sep"></i>
        <div class="form">
          <label for="stop2">停止:</label><input id="stop2" type="text" value="200" disabled>
          <label for="alg2">算法:</label><select id="alg2" disabled><option>Dassl(BDF)</option></select>
          <label class="tick dim"><input type="checkbox" checked disabled>同步</label><input type="text" value="0.1" aria-label="同步间隔" disabled>
        </div>
        <div class="radios">
          <label class="dim"><input type="radio" name="bits2" disabled>32位</label>
          <label class="dim"><input type="radio" name="bits2" checked disabled>64位</label>
        </div>
      </div>
      <h2>仿真</h2>
    </div>
    <div class="group v-tune">
      <div class="tools pad10"><div class="tune">
        <label class="tick dim"><input type="checkbox" disabled>在线调参</label>
        <label for="pauseat">暂停:</label><input id="pauseat" type="text">
      </div></div>
      <h2>调参</h2>
    </div>
    <div class="group v-chart">
      <div class="tools">
        <button class="big w54" aria-label="新建曲线"><svg class="i28"><use href="#addcurve"/></svg><i class="caret"></i></button>
        <div class="stack"><button class="small" aria-label="新建表格"><svg class="i18"><use href="#addtable"/></svg></button><button class="small" aria-label="新建动画"><svg class="i18"><use href="#addcube"/></svg></button></div>
        <i class="sep gap"></i>
        <div class="radios three">
          <label><input type="radio" name="keep">保持</label>
          <label><input type="radio" name="keep" checked>重绘</label>
          <label><input type="radio" name="keep">对比</label>
        </div>
      </div>
      <h2>图表</h2>
    </div>
    <div class="group v-sys">
      <div class="tools pad5"><button class="big" aria-label="Sysplorer"><svg><use href="#logo"/></svg></button></div>
      <h2>Sysplorer</h2>
    </div>
    <div class="group v-play">
      <div class="tools pad9">
        <div class="stack"><button class="small" aria-label="播放"><svg class="i18"><use href="#filmplay"/></svg></button><button class="small" aria-label="暂停"><svg class="i18"><use href="#filmpause"/></svg></button><button class="small" aria-label="回到开始"><svg class="i18"><use href="#filmstart"/></svg></button></div>
        <i class="sep gap"></i>
        <div class="form playback">
          <label for="speed">速度:</label><select id="speed" disabled><option>1</option></select>
          <label for="time">时间:</label><input id="time" type="text" value="0" disabled>
          <span></span><input type="range" value="0" aria-label="时间" disabled>
        </div>
        <button class="big sel" aria-label="标注"><svg class="i28"><use href="#annot"/></svg></button>
      </div>
      <h2>回放控制</h2>
    </div>
  </div>
  <div class="body">
    <aside class="strip left"><button class="vtab up"><span>仿真浏览器</span><svg class="i18"><use href="#wave"/></svg></button></aside>
    <div class="panel sim">
      <div class="phead"><h3>仿真浏览器</h3><i class="caret wide"></i><i class="dash"></i></div>
      <div class="toolrow">
        <button aria-label="打开"><svg class="i18"><use href="#folder"/></svg></button>
        <button class="dark" aria-label="保存"><svg class="i18"><use href="#save"/></svg></button>
        <button aria-label="导出"><svg class="i18"><use href="#export"/></svg></button>
        <i class="caret wide"></i><i class="tsep"></i>
        <button aria-label="坐标轴"><svg class="i18"><use href="#axis"/></svg></button>
        <i class="tsep"></i>
        <button class="on" aria-label="筛选曲线"><svg class="i18"><use href="#curveline"/></svg></button>
        <button aria-label="筛选列表"><svg class="i18"><use href="#lines"/></svg></button>
        <button aria-label="筛选变量"><svg class="i18"><use href="#curve"/></svg></button>
        <i class="tsep"></i>
        <button aria-label="全部折叠"><svg class="i18"><use href="#collapse"/></svg></button>
      </div>
      <label class="field plain"><input type="text" placeholder="搜索仿真结果变量" aria-label="搜索仿真结果变量"></label>
      <div class="progress"><i style="width:27.400%"></i><span>55.2s</span></div>
      <div class="cols"><span>名字</span><span>值</span><span>单位</span></div>
      <ul class="tree vars">
        <li><svg class="chev"><use href="#chevr"/></svg><span class="item"><svg><use href="#plot"/></svg>ThreeTanks 1</span></li>
        <li><svg class="chev"><use href="#chevd"/></svg><span class="item sel"><svg><use href="#plotrun"/></svg>ThreeTanks 2(Running)</span></li>
        <li class="v1"><svg class="chev"><use href="#chevr"/></svg><span class="item">tank1</span></li>
        <li class="v1"><svg class="chev"><use href="#chevr"/></svg><span class="item">tank2</span></li>
        <li class="v1"><svg class="chev"><use href="#chevr"/></svg><span class="item">system</span></li>
        <li class="v1"><svg class="chev"><use href="#chevr"/></svg><span class="item">tank3</span></li>
        <li class="v1"><svg class="chev"><use href="#chevr"/></svg><span class="item">pipe1</span></li>
        <li class="v1"><svg class="chev"><use href="#chevr"/></svg><span class="item">pipe2</span></li>
        <li class="v1"><svg class="chev"><use href="#chevr"/></svg><span class="item">pipe3</span></li>
      </ul>
      <div class="hscroll"><i></i></div>
    </div>
    <main class="blank">
      <button aria-label="新建曲线"><svg><use href="#addcurve"/></svg></button>
      <button aria-label="新建轨迹"><svg><use href="#addspiral"/></svg></button>
      <button aria-label="新建表格"><svg><use href="#addtable"/></svg></button>
      <button aria-label="新建动画"><svg><use href="#addcube"/></svg></button>
    </main>
  </div>
  <footer class="status"><span>仿真...</span><i class="grip"></i></footer>
</section>
</div>
</body>
</html>
```

FILE: styles.css
```css
* { box-sizing: border-box; }
body { margin: 0; font: 15px/20px "Noto Sans", "Noto Sans CJK SC", sans-serif; color: #000; background: #f3f3f3; }
button, input, select { font: inherit; color: inherit; }
button { margin: 0; padding: 0; border: 0; background: none; display: flex; align-items: center; }
h1, h2, h3, ul, pre { margin: 0; padding: 0; font-weight: 400; font-size: 15px; }
ul { list-style: none; }
svg, i { display: block; flex: none; }
.defs { position: absolute; width: 0; height: 0; }
.i18 { width: 18px; height: 18px; }
.i20 { width: 20px; height: 20px; }
.dim { color: #777; }
.caret { width: 0; height: 0; border: 4px solid transparent; border-top: 5px solid #000; border-bottom: 0; }
.dim .caret { border-top-color: #888; }
.caret.wide { border-width: 6px; border-top-width: 7px; border-top-color: #666; border-bottom-width: 0; }
.dash { width: 12px; height: 2px; background: #666; }

.desktop { display: grid; grid-template-columns: 1fr 1fr; height: 100vh; }
.window { position: relative; display: flex; flex-direction: column; min-width: 0; border: 1px solid #767676; border-bottom-color: #4c5a66; background: #f3f3f3; overflow: hidden; }
/* shadow that the active window casts on the viewer */
.viewer::before { content: ""; position: absolute; z-index: 2; inset: 0 auto 0 0; width: 32px; background: linear-gradient(90deg, rgba(0,0,0,.24), rgba(0,0,0,.06) 50%, transparent); pointer-events: none; }

.titlebar { flex: none; display: flex; align-items: center; height: 37px; background: #ddd; }
.qat { display: flex; align-items: center; gap: 7px; padding-left: 7px; }
.qat .app { margin-right: 10px; }
.qat .more { flex-direction: column; gap: 3px; margin: 0 6px 0 0; }
.qat .bar { width: 8px; height: 1px; background: #000; }
.titlebar h1 { flex: 1; min-width: 0; text-align: center; white-space: nowrap; }
.login { padding: 0 8px; }
.winctl { display: flex; }
.winctl button { width: 63px; height: 36px; justify-content: center; }
.winctl svg { width: 15px; height: 15px; }

.tabs { flex: none; display: flex; height: 28px; background: #ddd; }
.tabs > button { padding: 0 15px; }
.tabs > .file { padding: 0 24px 0 23px; }
.tabs > .on { background: #f3f3f3; color: #2f7cc0; }
.tabtools { display: flex; align-items: center; gap: 8px; margin-left: auto; padding-right: 4px; }
.findbox { display: flex; align-items: center; width: 286px; height: 22px; margin-right: -4px; padding: 0 7px 0 2px; border-radius: 4px; background: #fff; color: #555; }
.findbox input { flex: 1; min-width: 0; padding: 0; border: 0; background: none; outline: 0; }
::placeholder { color: #777; opacity: 1; }

.ribbon { flex: none; display: flex; align-items: flex-start; height: 125px; border-bottom: 1px solid #dedede; background: #f3f3f3; }
.group { display: flex; flex-direction: column; height: 119px; border-right: 1px solid #c6c6c6; flex: none; }
.group h2 { margin-top: auto; line-height: 12px; text-align: center; white-space: nowrap; }
.tools { display: flex; height: 97px; padding-top: 4px; }
.center { justify-content: center; }
.pad3 { padding-left: 3px; }
.pad5 { padding-left: 5px; }
.pad9 { padding-left: 9px; }
.pad10 { padding-left: 10px; }
.g-file { width: 170px; }
.g-lib { width: 84px; }
.g-view { width: 146px; }
.g-sim { width: 553px; }
.g-res { width: 97px; }
.g-env { width: 125px; }
.g-help { width: 72px; }
.v-sim { width: 572px; }
.v-tune { width: 155px; }
.v-chart { width: 153px; }
.v-sys { width: 78px; }
.v-play { width: 282px; }
.big { flex: none; flex-direction: column; min-width: 46px; height: 93px; padding-top: 13px; justify-content: flex-start; white-space: nowrap; }
.big svg { width: 26px; height: 26px; margin-bottom: 13px; }
.big .i28 { width: 28px; height: 28px; margin: -1px 0 12px; }
.big .caret { margin-top: 8px; }
.big.wide { width: 84px; }
.big.w45 { min-width: 45px; width: 45px; }
.big.w54 { width: 54px; }
.big.w54 .caret { margin-top: 17px; }
.big.w76 { width: 76px; }
.sel.big { background: #b0dbff; outline: 1px solid #96c6ec; outline-offset: -1px; }
.stack { display: flex; flex-direction: column; }
.small { height: 31px; padding: 0 2px; gap: 7px; white-space: nowrap; }
.small .caret { margin-left: 5px; }
.sep { width: 1px; height: 87px; margin: 3px 3px 0; background: #cfcfcf; }
.sep.gap { margin: 3px 8px 0; }

.form { display: grid; grid-template-columns: 58px 84px; grid-auto-rows: 26px; align-items: center; margin-left: 5px; white-space: nowrap; }
.v-sim .form { grid-template-columns: 64px 84px; }
.form input[type=text], .form select { width: 100%; height: 25px; padding: 0 2px; border: 2px solid #fafafa; border-radius: 2px; background: #f0f0f0; color: #777; opacity: 1; }
.form select { appearance: none; padding-right: 19px; background: #f0f0f0 url("data:image/svg+xml,%3Csvg xmlns='http://www.w3.org/2000/svg' width='20' height='21'%3E%3Cpath fill='%23f8f8f8' d='M0 0h20v21H0z'/%3E%3Cpath d='m5 8 5 5 5-5' fill='none' stroke='%23aaa'/%3E%3C/svg%3E") right / 20px 100% no-repeat; }
.form.playback { grid-template-columns: 46px 135px; margin: 0 6px 0 0; }
input[type=checkbox], input[type=radio] { appearance: none; flex: none; width: 16px; height: 16px; margin: 0; border: 1px solid #b8b8b8; border-radius: 3px; background: #fafafa; }
input[type=checkbox]:checked { background: #bdbdbd url("data:image/svg+xml,%3Csvg xmlns='http://www.w3.org/2000/svg' viewBox='0 0 14 14'%3E%3Cpath d='m3 7 3 3 5-6' fill='none' stroke='%23fff' stroke-width='1.300'/%3E%3C/svg%3E"); }
input[type=radio] { border-radius: 50%; border-color: #666; background: #fff; }
input[type=radio]:disabled { border-color: #c2c2c2; background: #fafafa; }
input[type=radio]:checked { border: 5px solid #0a61bd; }
input[type=radio]:checked:disabled { border-color: #bdbdbd; }
.tick { display: flex; align-items: center; gap: 6px; }
.radios { display: flex; flex-direction: column; padding-top: 5px; margin-left: 13px; white-space: nowrap; }
.radios label { display: flex; align-items: center; gap: 7px; height: 34px; }
.radios.three { padding: 0; margin: -3px 0 0; }
.radios.three label { height: 31px; }
.tune { display: grid; grid-template-columns: 53px 84px; grid-template-rows: 24px 26px; align-items: center; align-content: start; white-space: nowrap; }
.tune .tick { grid-column: 1 / 3; }
.tune input[type=text] { width: 100%; height: 26px; border: 1px solid #e8e8e8; border-bottom-color: #888; background: #fff; }
input[type=range] { appearance: none; width: 136px; height: 21px; margin: 0; background: linear-gradient(#d4dad8, #d4dad8) center / 100% 4px no-repeat; }
input[type=range]::-webkit-slider-thumb { appearance: none; width: 12px; height: 21px; background: #c8c8c8; }

.body { flex: 1; display: flex; min-height: 0; }
.strip { flex: none; display: flex; flex-direction: column; background: #e9e9e9; }
.strip.left { width: 29px; border-right: 1px solid #d0d0d0; }
.strip.right { width: 30px; border-left: 1px solid #d0d0d0; }
.vtab { flex-direction: column; gap: 5px; padding: 15px 0; width: 28px; border-bottom: 1px solid #d0d0d0; background: #fff; }
.vtab.last { margin-top: auto; border-top: 1px solid #d0d0d0; border-bottom: 0; }
.vtab span { writing-mode: vertical-rl; text-orientation: sideways; line-height: 20px; }
.vtab.up span { transform: rotate(180deg); }
.vtab.down { width: 29px; background: none; border: 0; padding-left: 2px; }

.panel { flex: none; display: flex; flex-direction: column; border-right: 1px solid #d0d0d0; min-height: 0; }
.lib { width: 509px; }
.sim { width: 321px; }
.phead { flex: none; display: flex; align-items: center; height: 28px; padding: 0 8px 0 5px; gap: 15px; }
.phead h3 { flex: 1; }
.psearch { flex: none; display: flex; align-items: flex-start; height: 28px; padding: 0 7px 0 6px; gap: 9px; }
.psearch > button { height: 26px; }
.psearch .mode { gap: 8px; margin-right: -4px; }
.field { flex: 1; min-width: 0; display: flex; align-items: center; gap: 7px; height: 26px; padding: 0 8px; border: 1px solid #e6e6e6; border-bottom-color: #888; background: #fff; color: #2f9c5a; }
.field input { flex: 1; min-width: 0; padding: 0; border: 0; outline: 0; background: none; }
.field.plain { padding: 0 1px; }
.treebox { flex: 1; display: flex; min-height: 0; overflow: hidden; }
.tree { flex: 1; min-width: 0; overflow: hidden; }
.tree li { display: flex; align-items: center; height: 29px; white-space: nowrap; }
.chev { width: 14px; height: 14px; }
.item { flex: 1; display: flex; align-items: center; gap: 7px; height: 100%; padding-left: 5px; white-space: pre; border-radius: 2px 0 0 2px; }
.item svg { width: 22px; height: 22px; }
.item.sel { background: #cecece; }
.l0 { padding-left: 14px; }
.l1 { padding-left: 28px; }
.l2 { padding-left: 42px; }
.l3 { padding-left: 56px; }
.l4 { padding-left: 70px; }
.vscroll { flex: none; width: 18px; border-left: 1px solid #fff; background: #f0f0f0; }
.thumb { width: 2px; height: 173px; margin: 122px 0 0 8px; background: #888; }
.usermodel { flex: 0 1 325px; border-top: 1px solid #d0d0d0; }
.usermodel .psearch { padding-left: 3px; }

.editor { flex: 1; min-width: 0; display: flex; flex-direction: column; }
.doctabs { flex: none; display: flex; height: 29px; padding-top: 1px; background: #efefef; }
.doctab { display: flex; align-items: center; width: 162px; padding-left: 16px; gap: 5px; background: #fff; color: #0f7fd0; }
.doctab button { margin-left: 4px; }
.doctab button svg { width: 9px; height: 9px; }
.crumbs { flex: none; display: flex; align-items: center; gap: 9px; height: 27px; padding-left: 6px; background: #fff; border-bottom: 1px solid #c9c9c9; }
.rcaret { border: 5px solid transparent; border-left: 6px solid #888; border-right: 0; }
.canvas { flex: 1; min-height: 0; background: #fff; }
.canvas svg { width: 100%; height: 100%; font-family: "Liberation Sans", Arial, sans-serif; text-anchor: middle; }
.tname { font-size: 20px; fill: #00f; }
.tval { font-size: 13px; }
.tpipe { font-size: 12px; fill: #00f; }
.tsys { font-size: 13px; fill: #22f; }
.outpane { flex: none; border-top: 1px solid #d0d0d0; }
.ohead { display: flex; align-items: center; gap: 15px; height: 27px; padding: 0 7px 0 5px; background: #3c82bf; color: #fff; }
.ohead h3 { flex: 1; }
.ohead .caret { border-top-color: #fff; }
.ohead .dash { background: #fff; }
.otabs { display: flex; height: 34px; border-bottom: 1px solid #d0d0d0; }
.otabs button { padding: 4px 15px 0; border-bottom: 2px solid transparent; }
.otabs .on { color: #2f7cc0; border-color: #3c82bf; }
.logbox { display: flex; height: 102px; overflow: hidden; }
.logbox pre { flex: 1; margin-top: -11px; padding-left: 4px; font: 13px/17px "Liberation Mono", monospace; white-space: pre; }
.logbox .thumb { height: 65px; margin-top: 28px; }

.bottombar { flex: none; display: flex; height: 29px; padding-left: 29px; border-top: 1px solid #d0d0d0; background: #e9e9e9; }
.bottombar button { gap: 5px; padding: 0 15px 0 14px; border-right: 1px solid #d0d0d0; }
.bottombar .on { background: #fff; }
.status { flex: none; display: flex; align-items: center; height: 30px; padding: 0 2px 0 8px; gap: 9px; background: #3c82bf; color: #fff; }
.status .square { width: 15px; height: 15px; border: 1px solid #bcd9f1; }
.status .ro { margin-left: auto; padding-right: 165px; }
.grip { align-self: flex-end; width: 10px; height: 10px; margin-bottom: 2px; background: radial-gradient(#fff 1px, transparent 1px) 0 0 / 4px 4px; clip-path: polygon(100% 0, 100% 100%, 0 100%); }
.viewer .grip { margin-left: auto; }

.toolrow { flex: none; display: flex; align-items: center; gap: 9px; height: 26px; padding-left: 6px; margin-bottom: 3px; }
.toolrow .dark { color: #444; }
.toolrow .caret { margin: 0 -1px; }
.toolrow .tsep { width: 1px; height: 20px; background: #cfcfcf; margin-right: 2px; }
.toolrow .on { margin: 0 -4px 0 -3px; height: 25px; padding: 0 4px; border: 1px solid #9accf2; border-radius: 2px; background: #cce8ff; }
.sim .field { flex: none; margin: 0 3px; }
.progress { position: relative; flex: none; display: flex; height: 22px; margin: 3px 2px 2px; border: 1px solid #bcbcbc; background: #e6e6e6; }
.progress i { background: #06b025; }
.progress span { position: absolute; inset: 0; text-align: center; }
.cols { flex: none; display: grid; grid-template-columns: 212px 80px 1fr; height: 30px; border-bottom: 1px solid #d0d0d0; overflow: hidden; white-space: nowrap; line-height: 32px; }
.cols span { padding-left: 5px; border-left: 1px solid #d0d0d0; overflow: hidden; }
.cols span:first-child { border: 0; }
.vars li { height: 24px; }
.vars .item { padding-left: 4px; }
.vars .item svg { width: 18px; height: 18px; }
.vars .chev { margin-right: 1px; }
.vars .v1 { padding-left: 15px; }
.vars .v1 .item { padding-left: 3px; }
.hscroll { flex: none; height: 16px; padding: 6px 0 0 18px; }
.hscroll i { width: 180px; height: 2px; background: #888; }
.blank { flex: 1; display: flex; align-items: center; justify-content: center; gap: 38px; padding: 4px 0 0 4px; background: #efefef; }
.blank svg { width: 34px; height: 34px; }
```
